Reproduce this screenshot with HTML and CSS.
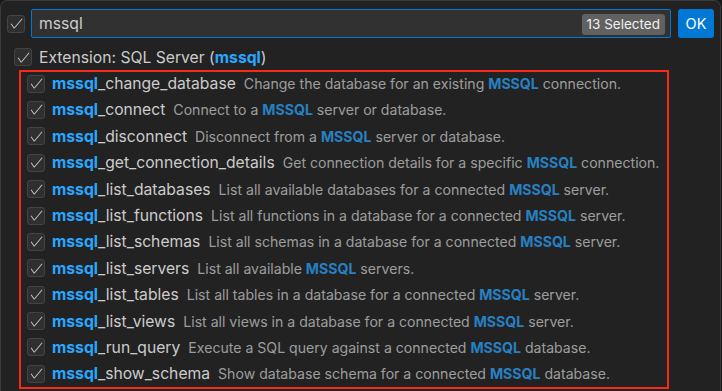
FILE: index.html
```html
<!DOCTYPE html>
<html>
<head>
<meta charset="utf-8">
<link rel="stylesheet" href="styles.css">
</head>
<body>
<div class="panel">
  <div class="top">
    <span class="cb"><svg viewBox="0 0 16 16"><path d="M14.431 3.323l-8.47 10-.79-.036-3.35-4.77.818-.574 2.978 4.24 8.051-9.506.764.646z"/></svg></span>
    <div class="input"><span class="val">mssql</span><span class="badge">13 Selected</span></div>
    <button class="ok">OK</button>
  </div>
  <div class="tree">
    <div class="row group"><span class="cb"><svg viewBox="0 0 16 16"><path d="M14.431 3.323l-8.47 10-.79-.036-3.35-4.77.818-.574 2.978 4.24 8.051-9.506.764.646z"/></svg></span><span class="label">Extension: SQL Server (<b class="hl">mssql</b>)</span></div>
    <div class="items">
      <div class="row item"><span class="cb"><svg viewBox="0 0 16 16"><path d="M14.431 3.323l-8.47 10-.79-.036-3.35-4.77.818-.574 2.978 4.24 8.051-9.506.764.646z"/></svg></span><span class="label"><b class="hl">mssql</b>_change_database</span><span class="desc">Change the database for an existing <b class="hl">MSSQL</b> connection.</span></div>
      <div class="row item"><span class="cb"><svg viewBox="0 0 16 16"><path d="M14.431 3.323l-8.47 10-.79-.036-3.35-4.77.818-.574 2.978 4.24 8.051-9.506.764.646z"/></svg></span><span class="label"><b class="hl">mssql</b>_connect</span><span class="desc">Connect to a <b class="hl">MSSQL</b> server or database.</span></div>
      <div class="row item"><span class="cb"><svg viewBox="0 0 16 16"><path d="M14.431 3.323l-8.47 10-.79-.036-3.35-4.77.818-.574 2.978 4.24 8.051-9.506.764.646z"/></svg></span><span class="label"><b class="hl">mssql</b>_disconnect</span><span class="desc">Disconnect from a <b class="hl">MSSQL</b> server or database.</span></div>
      <div class="row item"><span class="cb"><svg viewBox="0 0 16 16"><path d="M14.431 3.323l-8.47 10-.79-.036-3.35-4.77.818-.574 2.978 4.24 8.051-9.506.764.646z"/></svg></span><span class="label"><b class="hl">mssql</b>_get_connection_details</span><span class="desc">Get connection details for a specific <b class="hl">MSSQL</b> connection.</span></div>
      <div class="row item"><span class="cb"><svg viewBox="0 0 16 16"><path d="M14.431 3.323l-8.47 10-.79-.036-3.35-4.77.818-.574 2.978 4.24 8.051-9.506.764.646z"/></svg></span><span class="label"><b class="hl">mssql</b>_list_databases</span><span class="desc">List all available databases for a connected <b class="hl">MSSQL</b> server.</span></div>
      <div class="row item"><span class="cb"><svg viewBox="0 0 16 16"><path d="M14.431 3.323l-8.47 10-.79-.036-3.35-4.77.818-.574 2.978 4.24 8.051-9.506.764.646z"/></svg></span><span class="label"><b class="hl">mssql</b>_list_functions</span><span class="desc">List all functions in a database for a connected <b class="hl">MSSQL</b> server.</span></div>
      <div class="row item"><span class="cb"><svg viewBox="0 0 16 16"><path d="M14.431 3.323l-8.47 10-.79-.036-3.35-4.77.818-.574 2.978 4.24 8.051-9.506.764.646z"/></svg></span><span class="label"><b class="hl">mssql</b>_list_schemas</span><span class="desc">List all schemas in a database for a connected <b class="hl">MSSQL</b> server.</span></div>
      <div class="row item"><span class="cb"><svg viewBox="0 0 16 16"><path d="M14.431 3.323l-8.47 10-.79-.036-3.35-4.77.818-.574 2.978 4.24 8.051-9.506.764.646z"/></svg></span><span class="label"><b class="hl">mssql</b>_list_servers</span><span class="desc">List all available <b class="hl">MSSQL</b> servers.</span></div>
      <div class="row item"><span class="cb"><svg viewBox="0 0 16 16"><path d="M14.431 3.323l-8.47 10-.79-.036-3.35-4.77.818-.574 2.978 4.24 8.051-9.506.764.646z"/></svg></span><span class="label"><b class="hl">mssql</b>_list_tables</span><span class="desc">List all tables in a database for a connected <b class="hl">MSSQL</b> server.</span></div>
      <div class="row item"><span class="cb"><svg viewBox="0 0 16 16"><path d="M14.431 3.323l-8.47 10-.79-.036-3.35-4.77.818-.574 2.978 4.24 8.051-9.506.764.646z"/></svg></span><span class="label"><b class="hl">mssql</b>_list_views</span><span class="desc">List all views in a database for a connected <b class="hl">MSSQL</b> server.</span></div>
      <div class="row item"><span class="cb"><svg viewBox="0 0 16 16"><path d="M14.431 3.323l-8.47 10-.79-.036-3.35-4.77.818-.574 2.978 4.24 8.051-9.506.764.646z"/></svg></span><span class="label"><b class="hl">mssql</b>_run_query</span><span class="desc">Execute a SQL query against a connected <b class="hl">MSSQL</b> database.</span></div>
      <div class="row item"><span class="cb"><svg viewBox="0 0 16 16"><path d="M14.431 3.323l-8.47 10-.79-.036-3.35-4.77.818-.574 2.978 4.24 8.051-9.506.764.646z"/></svg></span><span class="label"><b class="hl">mssql</b>_show_schema</span><span class="desc">Show database schema for a connected <b class="hl">MSSQL</b> database.</span></div>
      <div class="annot"></div>
    </div>
  </div>
</div>
</body>
</html>
```

FILE: styles.css
```css
* { box-sizing: border-box; }
html, body { margin: 0; padding: 0; background: #181818; }
body {
  width: 722px;
  height: 391px;
  overflow: hidden;
  font-family: Inter, "Liberation Sans", sans-serif;
  color: #cccccc;
}
.panel {
  width: 721px;
  height: 391px;
  background: #222222;
  border: 1px solid #3a3a3a;
  border-bottom: 0;
  border-radius: 7px 7px 0 0;
}
.top {
  display: flex;
  align-items: center;
  padding: 8px 6px 0 6px;
}
.cb {
  flex: none;
  width: 18px;
  height: 18px;
  border-radius: 3px;
  background: #2f2f2f;
  border: 1px solid #434343;
  display: flex;
  align-items: center;
  justify-content: center;
}
.cb svg {
  width: 15px;
  height: 15px;
  fill: #c8c8c8;
}
.input {
  flex: 1;
  height: 29px;
  margin: 0 7px 0 6px;
  background: #313131;
  border: 1px solid #0078d4;
  border-radius: 2px;
  display: flex;
  align-items: center;
  justify-content: space-between;
  padding: 0 5px 0 7px;
}
.val {
  font-size: 15.7px;
  color: #cccccc;
}
.badge {
  background: #616161;
  color: #f0f0f0;
  border-radius: 3px;
  font-size: 13.5px;
  height: 21px;
  line-height: 21px;
  padding: 0 5px;
  margin-top: 2px;
}
.ok {
  flex: none;
  width: 36px;
  height: 29px;
  background: #0078d4;
  border: none;
  border-radius: 3px;
  color: #ffffff;
  font-family: Inter, "Liberation Sans", sans-serif;
  font-size: 14.5px;
  padding: 0;
}
.tree {
  padding-top: 6px;
}
.row {
  height: 26.4px;
  display: flex;
  align-items: center;
  white-space: nowrap;
}
.group { padding-left: 13px; }
.item { padding-left: 26px; }
.label {
  margin-left: 7px;
  font-size: 15.7px;
  color: #cccccc;
}
.hl {
  color: #2aa6ff;
  font-weight: 700;
}
.desc {
  margin-left: 8px;
  font-size: 14.1px;
  opacity: 0.72;
}
.items {
  position: relative;
}
.annot {
  position: absolute;
  left: 18px;
  top: -0.5px;
  width: 650px;
  height: 319px;
  border: 2px solid #f9291a;
}
```
